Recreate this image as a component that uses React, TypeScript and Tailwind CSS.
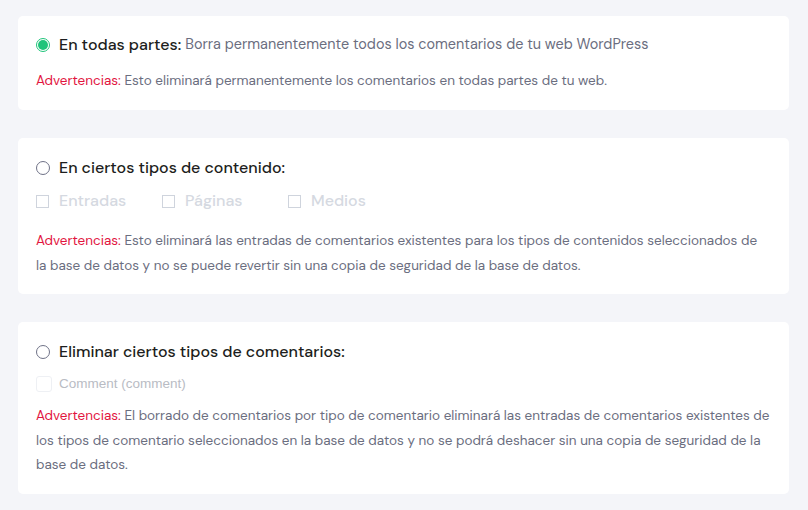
import React from "react";

const font = { fontFamily: "'DM Sans', Inter, 'Noto Sans', sans-serif" };

function Radio({ checked }: { checked?: boolean }) {
  return checked ? (
    <span className="flex h-[14px] w-[14px] shrink-0 items-center justify-center rounded-full border border-[#1fc47a]">
      <span className="h-[10px] w-[10px] rounded-full bg-[#1fc47a]" />
    </span>
  ) : (
    <span className="h-[14px] w-[14px] shrink-0 rounded-full border border-[#6f7287]" />
  );
}

function Check({ label }: { label: string }) {
  return (
    <label className="flex w-[126px] items-center gap-[10px] text-[16px] font-medium text-[#d5d9e1]">
      <span className="h-[13px] w-[13px] shrink-0 border border-[#cfd4dd]" />
      {label}
    </label>
  );
}

function Warn({ children }: { children: React.ReactNode }) {
  return (
    <p className="text-[13.5px] leading-[24.5px] text-[#6b6e80]">
      <span className="text-[#e2163f]">Advertencias:</span> {children}
    </p>
  );
}

export default function App() {
  return (
    <div className="min-h-[510px] bg-[#f4f5f9] px-[18px] pt-[16px] pb-[16px]" style={font}>
      <div className="flex w-[771px] flex-col gap-[28px]">
        <section className="rounded-[5px] bg-white px-[18px] pt-[17px] pb-[16.5px]">
          <div className="flex h-[24px] items-center gap-[9px]">
            <Radio checked />
            <span className="text-[16px] font-medium text-[#1d1e20]">En todas partes:</span>
            <span className="-ml-[5px] text-[14.4px] text-[#6b6e80]">Borra permanentemente todos los comentarios de tu web WordPress</span>
          </div>
          <div className="mt-[12px]">
            <Warn>Esto eliminará permanentemente los comentarios en todas partes de tu web.</Warn>
          </div>
        </section>

        <section className="rounded-[5px] bg-white px-[18px] pt-[18px] pb-[16px]">
          <div className="flex h-[24px] items-center gap-[9px]">
            <Radio />
            <span className="text-[16px] font-medium text-[#1d1e20]">En ciertos tipos de contenido:</span>
          </div>
          <div className="mt-[9px] flex h-[24px] items-center">
            <Check label="Entradas" />
            <Check label="Páginas" />
            <Check label="Medios" />
          </div>
          <div className="mt-[16px]">
            <Warn>
              Esto eliminará las entradas de comentarios existentes para los tipos de contenidos seleccionados de la base de datos y no se puede revertir sin una copia de seguridad de la base de datos.
            </Warn>
          </div>
        </section>

        <section className="rounded-[5px] bg-white px-[18px] pt-[18px] pb-[16.5px]">
          <div className="flex h-[24px] items-center gap-[9px]">
            <Radio />
            <span className="text-[16px] font-medium text-[#1d1e20]">Eliminar ciertos tipos de comentarios:</span>
          </div>
          <div className="mt-[8px] flex h-[24px] items-center gap-[7px]">
            <span className="h-[16px] w-[16px] shrink-0 rounded-[3px] border border-[#eef0f4]" />
            <span className="text-[13.5px] text-[#b9bcc4]" style={{ fontFamily: "'Liberation Sans', Arial, sans-serif" }}>
              Comment (comment)
            </span>
          </div>
          <div className="mt-[8px]">
            <Warn>
              El borrado de comentarios por tipo de comentario eliminará las entradas de comentarios existentes de los tipos de comentario seleccionados en la base de datos y no se podrá deshacer sin una copia de seguridad de la base de datos.
            </Warn>
          </div>
        </section>
      </div>
    </div>
  );
}
